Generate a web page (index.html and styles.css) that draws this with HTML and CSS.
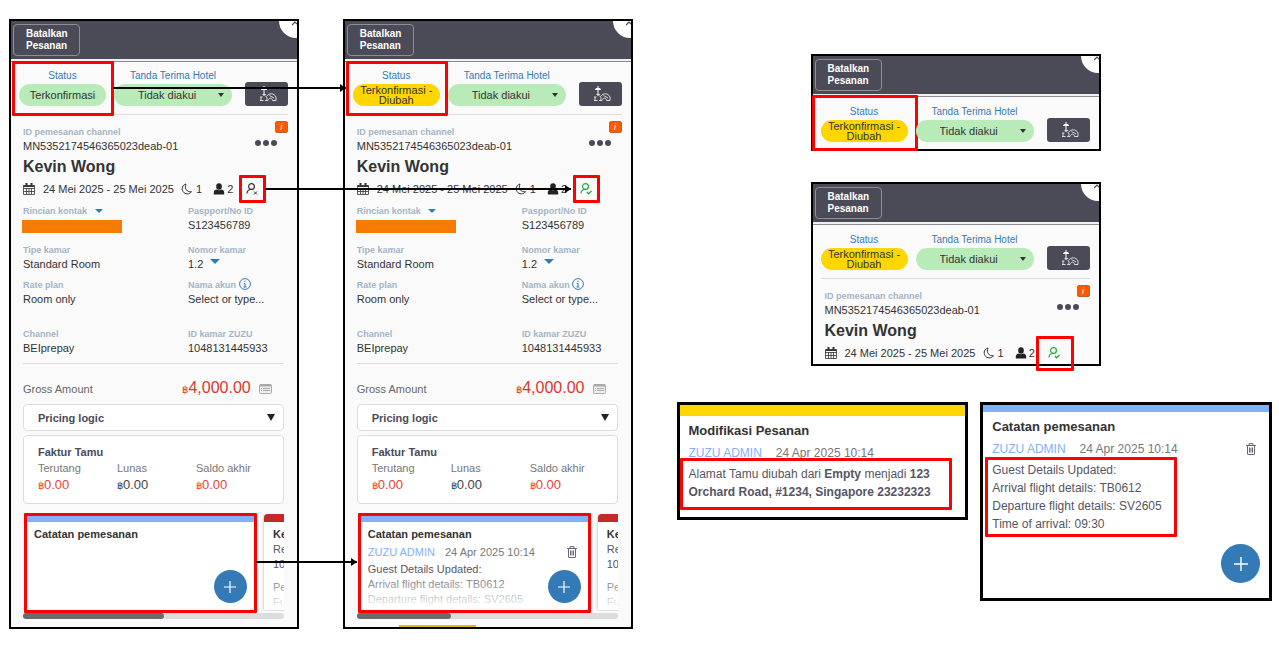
FILE: index.html
```html
<!DOCTYPE html>
<html lang="id">
<head>
    <meta charset="UTF-8">
    <meta name="viewport" content="width=device-width, initial-scale=1.0">
    <title>Perubahan Status Pesanan</title>
    <link rel="stylesheet" href="styles.css">
</head>
<body>
    <svg class="sprite" aria-hidden="true">
        <symbol id="i-cleaning" viewBox="0 0 18 16">
            <path d="M2 4c0-3 6-3 6 0z" fill="#fff"/>
            <path d="M5 0v2M5 4v6" fill="none" stroke="#fff"/>
            <path d="M3.500 8.500H7M1 11h2.500M1 14.500h3.500M2 11v3.500M6.500 10c2 1 2 4 0 4.500M7.500 10.500C10 6.500 15 7 17 11v3.500h-3.500c0-3-4-3-4.500 0H6.500M10.500 9.500L15 12" fill="none" stroke="#ddd"/>
        </symbol>
        <symbol id="i-calendar" viewBox="0 0 12 12">
            <path d="M.5 2.500h11v9H.5zM.5 5.500h11M.5 8.500h11M3.500 5v6.500M6 5v6.500M8.500 5v6.500" fill="none" stroke="#333" stroke-width=".8"/>
            <path d="M.5 2.500h11v1.500H.5zM2.500 0h2v3h-2zM7.500 0h2v3h-2z" fill="#333"/>
        </symbol>
        <symbol id="i-moon" viewBox="0 0 12 12">
            <path d="M5 1C1.500 2 .2 5.500 2 8.500c1.800 3 6.500 3.200 8.500.2C6 9.500 3 5.500 5 1z" fill="none" stroke="#333" stroke-linejoin="round"/>
        </symbol>
        <symbol id="i-person" viewBox="0 0 12 12">
            <ellipse cx="6" cy="3.500" rx="2.800" ry="3.200" fill="#222"/>
            <path d="M.8 11.500V9.500c0-2 1.500-2.800 3-3 1.200 1 3.200 1 4.400 0 1.500.2 3 1 3 3v2z" fill="#222"/>
        </symbol>
        <symbol id="i-guest" viewBox="0 0 12 12">
            <circle cx="5.500" cy="3.500" r="2.900" fill="none" stroke="currentColor" stroke-width="1.200"/>
            <path d="M1 10.500c0-2.500 1.500-3.700 3.500-4h2" fill="none" stroke="currentColor" stroke-width="1.200"/>
        </symbol>
        <symbol id="i-info" viewBox="0 0 12 12">
            <circle cx="6" cy="6" r="5.400" fill="none" stroke="#337ab7"/>
            <path d="M6 2.700v1.300M4.800 5.500H6V9M4.500 9h3" fill="none" stroke="#337ab7"/>
        </symbol>
        <symbol id="i-list" viewBox="0 0 13 10">
            <rect x=".5" y=".5" width="12" height="9" rx="1" fill="#eee" stroke="#aaa"/>
            <path d="M1 1.500h11" stroke="#aaa" stroke-width="2"/>
            <path d="M2 4.500h1M4 4.500h7M2 6.500h1M4 6.500h7" stroke="#aaa"/>
        </symbol>
        <symbol id="i-trash" viewBox="0 0 10 12">
            <path d="M0 2.500h10M3 2V.7h4V2M1.500 3v8c0 .4.200.5.500.5h6c.3 0 .5-.1.500-.5V3M3.500 4.500v5M5 4.500v5M6.500 4.500v5" fill="none" stroke="#667"/>
        </symbol>
        <symbol id="i-plus" viewBox="0 0 12 12">
            <path d="M6 0v12M0 6h12" stroke="#fff" stroke-width="1.200"/>
        </symbol>
        <symbol id="i-close" viewBox="0 0 8 8">
            <path d="M0 4l3-3 3 3" fill="none" stroke="#444" stroke-width="1.200"/>
        </symbol>
    </svg>

    <main class="board">
        <!-- before -->
        <section class="panel">
            <header class="topbar">
                <button type="button" class="cancel-btn">Batalkan<br>Pesanan</button>
                <button type="button" class="close-btn" aria-label="Tutup"><svg><use href="#i-close"/></svg></button>
            </header>
            <div class="status-row">
                <div class="status">
                    <span class="status-label">Status</span>
                    <span class="pill">Terkonfirmasi</span>
                    <span class="mark mark-status"></span>
                </div>
                <div class="receipt">
                    <label class="status-label" for="receipt-1">Tanda Terima Hotel</label>
                    <select id="receipt-1" class="pill pill-select"><option>Tidak diakui</option></select>
                </div>
                <button type="button" class="clean-btn" aria-label="Kebersihan"><svg><use href="#i-cleaning"/></svg></button>
            </div>
            <div class="content">
                <div class="booking">
                    <div>
                        <div class="label">ID pemesanan channel</div>
                        <div class="value">MN5352174546365023deab-01</div>
                    </div>
                    <div class="booking-tools">
                        <span class="badge">i</span>
                        <button type="button" class="more-btn" aria-label="Lainnya"><i></i><i></i><i></i></button>
                    </div>
                </div>
                <h2 class="guest-name">Kevin Wong</h2>
                <div class="stay">
                    <svg class="icon"><use href="#i-calendar"/></svg>
                    <span class="dates">24 Mei 2025 - 25 Mei 2025</span>
                    <svg class="icon"><use href="#i-moon"/></svg><span class="nights">1</span>
                    <svg class="icon"><use href="#i-person"/></svg><span class="guests">2</span>
                    <span class="guest-state">
                        <svg class="icon"><use href="#i-guest"/><path d="M8 8.500l3 3M11 8.500l-3 3" stroke="currentColor"/></svg>
                        <span class="mark mark-guest"></span>
                    </span>
                </div>
                <div class="fields">
                    <div>
                        <div class="label">Rincian kontak <span class="caret"></span></div>
                        <div class="redacted"></div>
                    </div>
                    <div>
                        <div class="label">Paspport/No ID</div>
                        <div class="value">S123456789</div>
                    </div>
                    <div>
                        <div class="label">Tipe kamar</div>
                        <div class="value">Standard Room</div>
                    </div>
                    <div>
                        <div class="label">Nomor kamar</div>
                        <div class="value">1.2 <span class="caret caret-big"></span></div>
                    </div>
                    <div>
                        <div class="label">Rate plan</div>
                        <div class="value">Room only</div>
                    </div>
                    <div>
                        <div class="label">Nama akun <svg class="icon"><use href="#i-info"/></svg></div>
                        <div class="value">Select or type...</div>
                    </div>
                    <div>
                        <div class="label">Channel</div>
                        <div class="value">BEIprepay</div>
                    </div>
                    <div>
                        <div class="label">ID kamar ZUZU</div>
                        <div class="value">1048131445933</div>
                    </div>
                </div>
                <div class="gross">
                    <span>Gross Amount</span>
                    <span class="amount"><small>฿</small>4,000.00</span>
                    <svg class="icon-list"><use href="#i-list"/></svg>
                </div>
                <button type="button" class="pricing"><span>Pricing logic</span><span class="pricing-caret"></span></button>
                <div class="invoice">
                    <h3>Faktur Tamu</h3>
                    <div class="sums">
                        <div><span>Terutang</span><b class="due"><small>฿</small>0.00</b></div>
                        <div><span>Lunas</span><b><small>฿</small>0.00</b></div>
                        <div><span>Saldo akhir</span><b class="due"><small>฿</small>0.00</b></div>
                    </div>
                </div>
                <div class="notes">
                    <div class="cards">
                        <article class="card">
                            <h3>Catatan pemesanan</h3>
                        </article>
                        <article class="card card-red">
                            <h3>Kebijakan</h3>
                            <p>Reservasi</p>
                            <p>100%</p>
                            <p class="gap">Pembatalan</p>
                            <p>Full</p>
                        </article>
                    </div>
                    <button type="button" class="add-btn" aria-label="Tambah catatan"><svg><use href="#i-plus"/></svg></button>
                    <span class="mark mark-note"></span>
                </div>
                <div class="scroll"><div class="thumb"></div></div>
            </div>
            <span class="arrow arrow-status"></span>
            <span class="arrow arrow-guest"></span>
            <span class="arrow arrow-note"></span>
        </section>

        <!-- after -->
        <section class="panel">
            <header class="topbar">
                <button type="button" class="cancel-btn">Batalkan<br>Pesanan</button>
                <button type="button" class="close-btn" aria-label="Tutup"><svg><use href="#i-close"/></svg></button>
            </header>
            <div class="status-row">
                <div class="status">
                    <span class="status-label">Status</span>
                    <span class="pill pill-changed">Terkonfirmasi -<br>Diubah</span>
                    <span class="mark mark-status"></span>
                </div>
                <div class="receipt">
                    <label class="status-label" for="receipt-2">Tanda Terima Hotel</label>
                    <select id="receipt-2" class="pill pill-select"><option>Tidak diakui</option></select>
                </div>
                <button type="button" class="clean-btn" aria-label="Kebersihan"><svg><use href="#i-cleaning"/></svg></button>
            </div>
            <div class="content">
                <div class="booking">
                    <div>
                        <div class="label">ID pemesanan channel</div>
                        <div class="value">MN5352174546365023deab-01</div>
                    </div>
                    <div class="booking-tools">
                        <span class="badge">i</span>
                        <button type="button" class="more-btn" aria-label="Lainnya"><i></i><i></i><i></i></button>
                    </div>
                </div>
                <h2 class="guest-name">Kevin Wong</h2>
                <div class="stay">
                    <svg class="icon"><use href="#i-calendar"/></svg>
                    <span class="dates">24 Mei 2025 - 25 Mei 2025</span>
                    <svg class="icon"><use href="#i-moon"/></svg><span class="nights">1</span>
                    <svg class="icon"><use href="#i-person"/></svg><span class="guests">2</span>
                    <span class="guest-state guest-ok">
                        <svg class="icon"><use href="#i-guest"/><path d="M7 9l1.500 1.800L11.500 8" fill="none" stroke="currentColor" stroke-width="1.300"/></svg>
                        <span class="mark mark-guest"></span>
                    </span>
                </div>
                <div class="fields">
                    <div>
                        <div class="label">Rincian kontak <span class="caret"></span></div>
                        <div class="redacted"></div>
                    </div>
                    <div>
                        <div class="label">Paspport/No ID</div>
                        <div class="value">S123456789</div>
                    </div>
                    <div>
                        <div class="label">Tipe kamar</div>
                        <div class="value">Standard Room</div>
                    </div>
                    <div>
                        <div class="label">Nomor kamar</div>
                        <div class="value">1.2 <span class="caret caret-big"></span></div>
                    </div>
                    <div>
                        <div class="label">Rate plan</div>
                        <div class="value">Room only</div>
                    </div>
                    <div>
                        <div class="label">Nama akun <svg class="icon"><use href="#i-info"/></svg></div>
                        <div class="value">Select or type...</div>
                    </div>
                    <div>
                        <div class="label">Channel</div>
                        <div class="value">BEIprepay</div>
                    </div>
                    <div>
                        <div class="label">ID kamar ZUZU</div>
                        <div class="value">1048131445933</div>
                    </div>
                </div>
                <div class="gross">
                    <span>Gross Amount</span>
                    <span class="amount"><small>฿</small>4,000.00</span>
                    <svg class="icon-list"><use href="#i-list"/></svg>
                </div>
                <button type="button" class="pricing"><span>Pricing logic</span><span class="pricing-caret"></span></button>
                <div class="invoice">
                    <h3>Faktur Tamu</h3>
                    <div class="sums">
                        <div><span>Terutang</span><b class="due"><small>฿</small>0.00</b></div>
                        <div><span>Lunas</span><b><small>฿</small>0.00</b></div>
                        <div><span>Saldo akhir</span><b class="due"><small>฿</small>0.00</b></div>
                    </div>
                </div>
                <div class="notes">
                    <div class="cards">
                        <article class="card">
                            <h3>Catatan pemesanan</h3>
                            <div class="meta"><a href="#">ZUZU ADMIN</a><span>24 Apr 2025 10:14</span><svg class="trash"><use href="#i-trash"/></svg></div>
                            <p>Guest Details Updated:</p>
                            <p>Arrival flight details: TB0612</p>
                            <p>Departure flight details: SV2605</p>
                        </article>
                        <article class="card card-red">
                            <h3>Kebijakan</h3>
                            <p>Reservasi</p>
                            <p>100%</p>
                            <p class="gap">Pembatalan</p>
                            <p>Full</p>
                        </article>
                    </div>
                    <button type="button" class="add-btn" aria-label="Tambah catatan"><svg><use href="#i-plus"/></svg></button>
                    <span class="mark mark-note"></span>
                </div>
                <div class="scroll"><div class="thumb thumb-short"></div></div>
            </div>
            <div class="behind"><span></span></div>
        </section>

        <!-- details -->
        <div class="details">
            <section class="panel clip">
                <header class="topbar">
                    <button type="button" class="cancel-btn">Batalkan<br>Pesanan</button>
                    <button type="button" class="close-btn" aria-label="Tutup"><svg><use href="#i-close"/></svg></button>
                </header>
                <div class="status-row">
                    <div class="status">
                        <span class="status-label">Status</span>
                        <span class="pill pill-changed">Terkonfirmasi -<br>Diubah</span>
                        <span class="mark mark-status mark-wide"></span>
                    </div>
                    <div class="receipt">
                        <label class="status-label" for="receipt-3">Tanda Terima Hotel</label>
                        <select id="receipt-3" class="pill pill-select"><option>Tidak diakui</option></select>
                    </div>
                    <button type="button" class="clean-btn" aria-label="Kebersihan"><svg><use href="#i-cleaning"/></svg></button>
                </div>
            </section>

            <section class="panel clip">
                <header class="topbar">
                    <button type="button" class="cancel-btn">Batalkan<br>Pesanan</button>
                    <button type="button" class="close-btn" aria-label="Tutup"><svg><use href="#i-close"/></svg></button>
                </header>
                <div class="status-row">
                    <div class="status">
                        <span class="status-label">Status</span>
                        <span class="pill pill-changed">Terkonfirmasi -<br>Diubah</span>
                    </div>
                    <div class="receipt">
                        <label class="status-label" for="receipt-4">Tanda Terima Hotel</label>
                        <select id="receipt-4" class="pill pill-select"><option>Tidak diakui</option></select>
                    </div>
                    <button type="button" class="clean-btn" aria-label="Kebersihan"><svg><use href="#i-cleaning"/></svg></button>
                </div>
                <div class="content content-cut">
                    <div class="booking">
                        <div>
                            <div class="label">ID pemesanan channel</div>
                            <div class="value">MN5352174546365023deab-01</div>
                        </div>
                        <div class="booking-tools">
                            <span class="badge">i</span>
                            <button type="button" class="more-btn" aria-label="Lainnya"><i></i><i></i><i></i></button>
                        </div>
                    </div>
                    <h2 class="guest-name">Kevin Wong</h2>
                    <div class="stay">
                        <svg class="icon"><use href="#i-calendar"/></svg>
                        <span class="dates">24 Mei 2025 - 25 Mei 2025</span>
                        <svg class="icon"><use href="#i-moon"/></svg><span class="nights">1</span>
                        <svg class="icon"><use href="#i-person"/></svg><span class="guests">2</span>
                        <span class="guest-state guest-ok">
                            <svg class="icon"><use href="#i-guest"/><path d="M7 9l1.500 1.800L11.500 8" fill="none" stroke="currentColor" stroke-width="1.300"/></svg>
                            <span class="mark mark-guest mark-big"></span>
                        </span>
                    </div>
                </div>
            </section>

            <div class="note-row">
                <article class="note note-yellow">
                    <h3>Modifikasi Pesanan</h3>
                    <div class="meta"><a href="#">ZUZU ADMIN</a><span>24 Apr 2025 10:14</span></div>
                    <p>Alamat Tamu diubah dari <b>Empty</b> menjadi <b>123 Orchard Road, #1234, Singapore 23232323</b>
                        <span class="mark mark-address"></span>
                    </p>
                </article>
                <article class="note note-blue">
                    <h3>Catatan pemesanan</h3>
                    <div class="meta"><a href="#">ZUZU ADMIN</a><span>24 Apr 2025 10:14</span><svg class="trash"><use href="#i-trash"/></svg></div>
                    <p>Guest Details Updated:<br>Arrival flight details: TB0612<br>Departure flight details: SV2605<br>Time of arrival: 09:30
                        <span class="mark mark-flight"></span>
                    </p>
                    <button type="button" class="add-btn" aria-label="Tambah catatan"><svg><use href="#i-plus"/></svg></button>
                </article>
            </div>
        </div>
    </main>
</body>
</html>
```
FILE: styles.css
```css
* {
    box-sizing: border-box;
}
body {
    margin: 0;
    background: #ffffff;
    font-family: "Liberation Sans", Arial, sans-serif;
    font-size: 11px;
    line-height: 14px;
    color: #333333;
}
h2, h3, p {
    margin: 0;
}
button {
    font-family: inherit;
    cursor: pointer;
}
svg {
    overflow: visible;
}
.sprite {
    position: absolute;
    width: 0;
    height: 0;
}
.board {
    display: grid;
    grid-template-columns: minmax(0, 290fr) minmax(0, 290fr) minmax(0, 596fr);
    gap: 44px;
    align-items: start;
    padding: 19px 7px 19px 9px;
}
.panel {
    position: relative;
    background: #fafafa;
    border: 2px solid #000000;
}

/* top bar */
.topbar {
    position: relative;
    overflow: hidden;
    height: 41px;
    padding: 3px 2px;
    background: #4b4a57;
    border-bottom: 1px solid #8a8a90;
    box-shadow: inset 0 -2px #f0f0f0;
}
.cancel-btn {
    width: 67px;
    height: 32px;
    padding: 0 0 0 12px;
    background: none;
    border: 1px solid #8f8e96;
    border-radius: 4px;
    color: #ffffff;
    font-size: 10px;
    font-weight: bold;
    line-height: 12px;
    text-align: left;
}
.close-btn {
    position: absolute;
    top: -17px;
    right: -16px;
    width: 34px;
    height: 34px;
    padding: 0;
    background: #ffffff;
    border: none;
    border-radius: 50%;
}
.close-btn svg {
    position: absolute;
    left: 13px;
    top: 17px;
    width: 8px;
    height: 8px;
}

/* status row */
.status-row {
    display: flex;
    align-items: flex-end;
    gap: 8px;
    margin: 0 9px 0 8px;
    padding: 7px 0 8px;
    border-bottom: 1px solid #dddddd;
}
.status {
    position: relative;
    width: 87px;
}
.receipt {
    position: relative;
    width: 118px;
}
.receipt::after {
    content: "";
    position: absolute;
    right: 8px;
    bottom: 9px;
    border: 3px solid transparent;
    border-top: 4px solid #333333;
    border-bottom: none;
}
.status-label {
    display: block;
    color: #337ab7;
    font-size: 10px;
    text-align: center;
}
.pill {
    display: flex;
    align-items: center;
    justify-content: center;
    width: 100%;
    height: 22px;
    margin-top: 1px;
    background: #b9ebb9;
    border: none;
    border-radius: 11px;
    color: #333333;
    font-size: 11px;
}
.pill-changed {
    background: #ffd600;
    line-height: 10px;
    text-align: center;
}
.pill-select {
    appearance: none;
    padding: 0 0 0 24px;
    font-family: inherit;
}
.clean-btn {
    display: flex;
    align-items: center;
    justify-content: center;
    width: 43px;
    height: 24px;
    margin-left: auto;
    padding: 0 0 0 4px;
    background: #4b4a57;
    border: none;
    border-radius: 3px;
}
.clean-btn svg {
    width: 18px;
    height: 16px;
}

/* booking */
.content {
    padding: 10px 13px 8px 12px;
}
.booking {
    display: flex;
    justify-content: space-between;
}
.label {
    height: 14px;
    color: #a3b5c6;
    font-size: 9px;
    font-weight: bold;
    white-space: nowrap;
}
.label .icon {
    vertical-align: -2px;
}
.value {
    white-space: nowrap;
}
.booking-tools {
    display: flex;
    flex-direction: column;
    align-items: flex-end;
    gap: 7px;
    margin: -4px -4px 0 0;
}
.badge {
    width: 13px;
    height: 12px;
    background: #ff5a00;
    border: 1px solid #b9653a;
    border-radius: 2px;
    color: #ffffff;
    font-size: 9px;
    font-style: italic;
    line-height: 10px;
    text-align: center;
}
.more-btn {
    display: flex;
    gap: 2px;
    margin-right: 11px;
    padding: 0;
    background: none;
    border: none;
}
.more-btn i {
    width: 6px;
    height: 6px;
    background: #4b4a57;
    border-radius: 50%;
}
.guest-name {
    margin: 4px 0 5px;
    font-size: 16px;
    line-height: 20px;
}
.stay {
    display: flex;
    align-items: center;
    white-space: nowrap;
}
.icon {
    width: 12px;
    height: 12px;
}
.dates {
    width: 125px;
    margin: 0 13px 0 8px;
}
.nights {
    margin: 0 11px 0 3px;
}
.guests {
    margin: 0 13px 0 2px;
}
.guest-state {
    position: relative;
    display: flex;
}
.guest-ok {
    color: #28a745;
}
.fields {
    display: grid;
    grid-template-columns: 165px 1fr;
    row-gap: 7px;
    margin-top: 8px;
    padding-bottom: 8px;
    border-bottom: 1px solid #dddddd;
}
.fields > div:nth-child(-n+2) {
    margin-bottom: 3px;
}
.fields > div:nth-child(n+7) {
    margin-top: 14px;
}
.caret {
    display: inline-block;
    margin-left: 5px;
    border: 4px solid transparent;
    border-top-color: #337ab7;
    border-bottom: none;
    vertical-align: 1px;
}
.caret-big {
    margin-left: 4px;
    border-width: 5px;
    border-bottom: none;
    vertical-align: 4px;
}
.redacted {
    width: 100px;
    height: 13px;
    margin: 2px 0 0 -1px;
    background: #f57c00;
}

/* amounts */
.gross {
    display: flex;
    align-items: center;
    margin: 14px 12px 4px 0;
    color: #666666;
    line-height: 20px;
}
.amount {
    margin-left: auto;
    color: #d9392f;
    font-size: 16px;
}
.amount small, .sums small {
    font-size: 10px;
}
.icon-list {
    width: 13px;
    height: 10px;
    margin-left: 8px;
}
.pricing {
    display: flex;
    align-items: center;
    justify-content: space-between;
    width: 100%;
    height: 27px;
    padding: 0 8px 0 14px;
    background: #ffffff;
    border: 1px solid #dddddd;
    border-radius: 4px;
    color: #4b4a57;
    font-size: 11px;
    font-weight: bold;
}
.pricing-caret {
    border: 4px solid transparent;
    border-top: 7px solid #222222;
    border-bottom: none;
}
.invoice {
    margin-top: 4px;
    padding: 8px 14px;
    background: #ffffff;
    border: 1px solid #dddddd;
    border-radius: 4px;
}
.invoice h3 {
    color: #4b4a57;
    font-size: 11px;
    line-height: 16px;
}
.sums {
    display: grid;
    grid-template-columns: 79px 79px 1fr;
    color: #777777;
    white-space: nowrap;
}
.sums span {
    display: block;
    line-height: 16px;
}
.sums b {
    display: block;
    color: #444444;
    font-size: 13px;
    font-weight: normal;
    line-height: 18px;
}
.sums .due {
    color: #e0453c;
}

/* note cards */
.notes {
    position: relative;
    height: 97px;
    margin-top: 10px;
    padding: 0 0 0 2px;
}
.cards {
    display: flex;
    gap: 8px;
    height: 97px;
    overflow: hidden;
}
.card {
    position: relative;
    flex: 0 0 231px;
    height: 96px;
    padding: 4px 9px;
    overflow: hidden;
    background: #ffffff;
    border-top: 8px solid #80b1ff;
    border-radius: 4px 4px 0 0;
    box-shadow: 0 0 3px rgba(0, 0, 0, 0.3);
    color: #555563;
}
.card::after {
    content: "";
    position: absolute;
    left: 0;
    right: 0;
    bottom: 0;
    height: 40px;
    background: linear-gradient(rgba(255, 255, 255, 0), #ffffff);
}
.card-red {
    border-top-color: #c62828;
}
.card h3 {
    color: #333333;
    font-size: 11px;
    line-height: 16px;
}
.card p {
    line-height: 15px;
    white-space: nowrap;
}
.card .gap {
    margin-top: 8px;
}
.meta {
    display: flex;
    align-items: center;
    color: #777777;
    line-height: 20px;
    white-space: nowrap;
}
.meta a {
    margin-right: 10px;
    color: #80b1ff;
    text-decoration: none;
}
.trash {
    width: 10px;
    height: 12px;
    margin: 0 4px 0 auto;
}
.add-btn {
    position: absolute;
    right: 37px;
    bottom: 8px;
    display: flex;
    align-items: center;
    justify-content: center;
    width: 33px;
    height: 33px;
    padding: 0;
    background: #337ab7;
    border: none;
    border-radius: 50%;
}
.add-btn svg {
    width: 12px;
    height: 12px;
}
.scroll {
    height: 6px;
    margin-top: 2px;
    background: #dddddd;
    border-radius: 3px;
}
.thumb {
    width: 54%;
    height: 6px;
    background: #6b6b6b;
    border-radius: 3px;
}
.thumb-short {
    width: 36%;
}
.behind {
    position: absolute;
    left: 54px;
    right: 0;
    bottom: 0;
    height: 2px;
}
.behind span {
    display: block;
    width: 77px;
    height: 2px;
    background: #e0b90a;
}

/* red marks and arrows */
.mark {
    position: absolute;
    border: 3px solid #ff0000;
    border-radius: 1px;
}
.mark-status {
    left: -7px;
    top: -8px;
    width: 102px;
    height: 55px;
}
.mark-wide {
    left: -9px;
    top: -10px;
    width: 106px;
    height: 56px;
}
.mark-guest {
    left: -7px;
    top: -8px;
    width: 27px;
    height: 28px;
}
.mark-big {
    left: -12px;
    top: -11px;
    width: 38px;
    height: 35px;
}
.mark-note {
    left: 1px;
    top: -1px;
    width: 233px;
    height: 100px;
}
.mark-address {
    left: -9px;
    top: -7px;
    width: 272px;
    height: 52px;
}
.mark-flight {
    left: -7px;
    top: -4px;
    width: 192px;
    height: 80px;
}
.arrow {
    position: absolute;
    z-index: 1;
    height: 2px;
    background: #000000;
}
.arrow::after {
    content: "";
    position: absolute;
    right: 0;
    top: -3px;
    border: 4px solid transparent;
    border-left: 6px solid #000000;
    border-right: none;
}
.arrow-status {
    top: 66px;
    left: 102px;
    right: -49px;
}
.arrow-guest {
    top: 167px;
    left: 254px;
    right: -274px;
}
.arrow-note {
    top: 540px;
    left: 245px;
    right: -60px;
}

/* enlarged details */
.details {
    padding-top: 35px;
}
.clip {
    width: 290px;
    margin: 0 0 31px 134px;
}
.clip .status-row {
    padding-top: 8px;
}
.clip:first-child .status-row {
    padding-bottom: 7px;
    border-bottom: none;
}
.content-cut {
    padding-bottom: 4px;
}
.note-row {
    display: grid;
    grid-template-columns: 1fr 1fr;
    gap: 12px;
    align-items: start;
    margin-top: 36px;
}
.note {
    position: relative;
    padding: 5px 9px;
    background: #ffffff;
    border: 3px solid #000000;
    color: #555563;
    font-size: 12px;
    line-height: 18px;
}
.note::before {
    content: "";
    display: block;
    height: 11px;
    margin: -5px -9px 5px;
    background: #ffd600;
}
.note h3 {
    color: #333333;
    font-size: 13px;
    line-height: 20px;
}
.note .meta {
    line-height: 24px;
}
.note .meta a {
    margin-right: 14px;
}
.note p {
    position: relative;
}
.note-yellow {
    height: 118px;
}
.note-blue {
    height: 199px;
}
.note-blue::before {
    height: 7px;
    background: #80b1ff;
}
.note .add-btn {
    right: 9px;
    bottom: 15px;
    width: 39px;
    height: 39px;
}
.note .add-btn svg {
    width: 14px;
    height: 14px;
}
```
